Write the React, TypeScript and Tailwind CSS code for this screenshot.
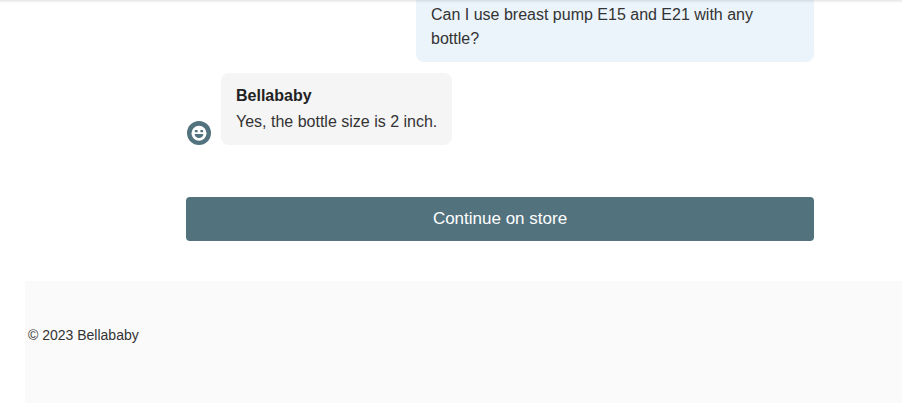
import React from "react";

const SmileyIcon = () => (
  <svg width="24" height="24" viewBox="0 0 24 24" aria-hidden="true">
    <circle cx="12" cy="12" r="12" fill="#52727e" />
    <circle cx="12" cy="12.2" r="7.5" fill="#fff" />
    <rect x="7.9" y="9" width="2.7" height="2.3" rx="0.3" fill="#52727e" />
    <rect x="13.4" y="9" width="2.7" height="2.3" rx="0.3" fill="#52727e" />
    <path d="M7.6 13h8.8a4.4 4 0 0 1-8.8 0z" fill="#52727e" />
  </svg>
);

const QuestionBubble = ({ text }: { text: string }) => (
  <div className="w-[398px] self-end rounded-b-lg bg-[#ebf4fa] px-[15px] pt-[3px] pb-[11px] text-base leading-6 text-[#333]">
    {text}
  </div>
);

const AnswerBubble = ({ author, text }: { author: string; text: string }) => (
  <div className="mt-[11px] flex items-end gap-[10px] pl-px">
    <SmileyIcon />
    <div className="h-[72px] w-[231px] rounded-lg bg-[#f5f5f5] px-[15px] pt-[10px] whitespace-nowrap">
      <p className="text-base leading-[26px] font-bold text-[#222]">{author}</p>
      <p className="text-base leading-[26px] text-[#333]">{text}</p>
    </div>
  </div>
);

export default function App() {
  return (
    <div className="relative h-[403px] overflow-hidden bg-white font-['Liberation_Sans',Arial,sans-serif]">
      {/* edge of the sticky header */}
      <div className="absolute inset-x-0 top-0 h-[3px] bg-linear-to-b from-black/10 to-black/0" />
      <main className="ml-[186px] flex w-[628px] flex-col">
        <QuestionBubble text="Can I use breast pump E15 and E21 with any bottle?" />
        <AnswerBubble
          author="Bellababy"
          text="Yes, the bottle size is 2 inch."
        />
        <button
          type="button"
          className="mt-[52px] h-11 rounded bg-[#52727e] pb-px text-[17px] text-white"
        >
          Continue on store
        </button>
      </main>
      <footer className="mt-10 ml-[25px] h-[122px] bg-[#fafafa] pt-11 pl-[3px] text-sm leading-5 text-[#333]">
        © 2023 Bellababy
      </footer>
    </div>
  );
}
